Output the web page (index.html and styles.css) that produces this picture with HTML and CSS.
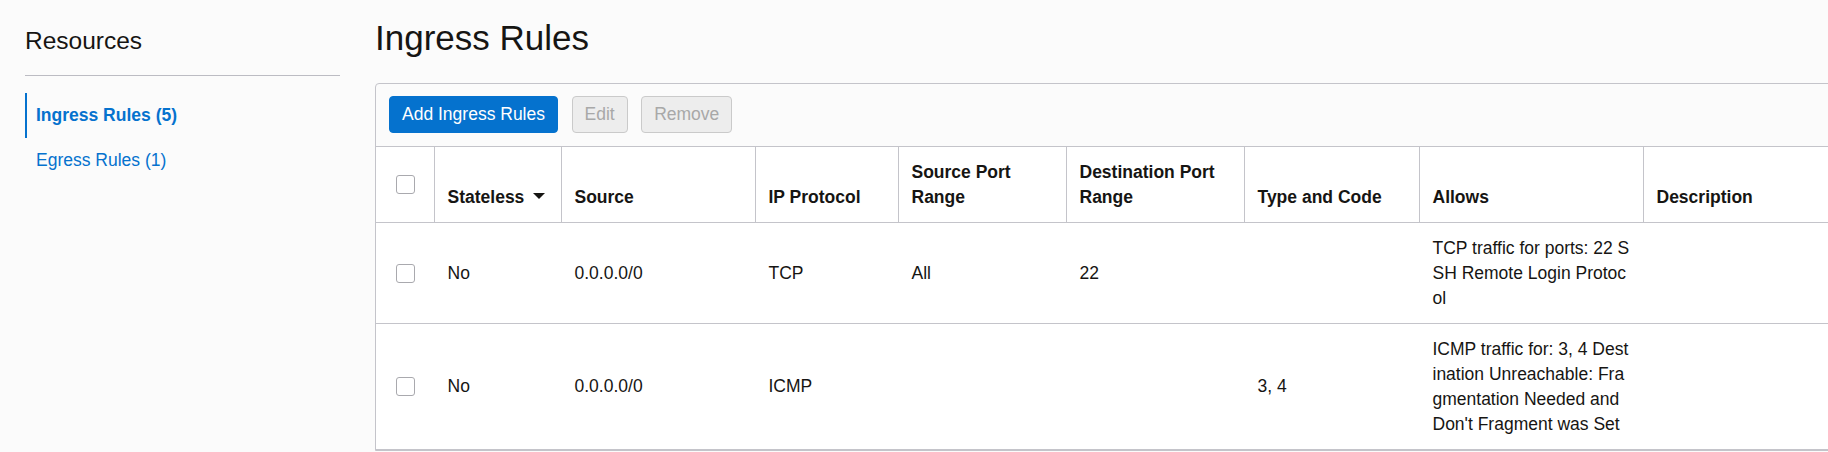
FILE: index.html
```html
<!DOCTYPE html>
<html lang="en">
<head>
<meta charset="utf-8">
<title>Ingress Rules</title>
<link rel="stylesheet" href="styles.css">
</head>
<body>
<div class="page">
  <aside class="sidebar">
    <h2 class="side-title">Resources</h2>
    <nav class="side-nav">
      <a class="side-link active" href="#">Ingress Rules (5)</a>
      <a class="side-link" href="#">Egress Rules (1)</a>
    </nav>
  </aside>
  <main class="main">
    <h1 class="title">Ingress Rules</h1>
    <section class="card">
      <div class="toolbar">
        <button class="btn btn-primary" type="button">Add Ingress Rules</button>
        <button class="btn btn-disabled" type="button" disabled>Edit</button>
        <button class="btn btn-disabled" type="button" disabled>Remove</button>
      </div>
      <table class="rules">
        <colgroup>
          <col class="w-check">
          <col class="w-stateless">
          <col class="w-source">
          <col class="w-proto">
          <col class="w-sport">
          <col class="w-dport">
          <col class="w-type">
          <col class="w-allows">
          <col>
        </colgroup>
        <thead>
          <tr>
            <th class="c-check"><span class="cb"></span></th>
            <th class="nowrap">Stateless<svg class="caret" width="12" height="6" viewBox="0 0 12 6"><path d="M0 0H12L6 6Z"/></svg></th>
            <th>Source</th>
            <th>IP Protocol</th>
            <th>Source Port Range</th>
            <th>Destination Port Range</th>
            <th>Type and Code</th>
            <th>Allows</th>
            <th>Description</th>
          </tr>
        </thead>
        <tbody>
          <tr>
            <td class="c-check"><span class="cb"></span></td>
            <td>No</td>
            <td>0.0.0.0/0</td>
            <td>TCP</td>
            <td>All</td>
            <td>22</td>
            <td></td>
            <td class="allows">TCP traffic for ports: 22 SSH Remote Login Protocol</td>
            <td></td>
          </tr>
          <tr>
            <td class="c-check"><span class="cb"></span></td>
            <td>No</td>
            <td>0.0.0.0/0</td>
            <td>ICMP</td>
            <td></td>
            <td></td>
            <td>3, 4</td>
            <td class="allows">ICMP traffic for: 3, 4 Destination Unreachable: Fragmentation Needed and Don't Fragment was Set</td>
            <td></td>
          </tr>
        </tbody>
      </table>
    </section>
  </main>
</div>
</body>
</html>
```
FILE: styles.css
```css
html, body {
  margin: 0;
  padding: 0;
  background: #fbfbfb;
  overflow: hidden;
}

body {
  font-family: "Liberation Sans", Arial, Helvetica, sans-serif;
  color: #161513;
}

.page {
  display: flex;
  gap: 35px;
  padding: 18px 0 0 25px;
}

/* Sidebar */
.sidebar {
  flex: 0 0 315px;
  padding-top: 9px;
}

.side-title {
  margin: 0;
  font-size: 24.5px;
  line-height: 28px;
  font-weight: normal;
  padding-bottom: 20px;
  border-bottom: 1px solid #bcbcc3;
}

.side-nav {
  display: flex;
  flex-direction: column;
  margin-top: 17px;
}

.side-link {
  display: flex;
  align-items: center;
  height: 45px;
  padding-left: 9px;
  border-left: 2px solid transparent;
  font-size: 17.5px;
  color: #0572ce;
  text-decoration: none;
}

.side-link.active {
  border-left-color: #0572ce;
  font-weight: bold;
}

/* Main */
.main {
  flex: 1;
  min-width: 0;
}

.title {
  margin: 0 0 25px 0;
  font-size: 35px;
  line-height: 40px;
  font-weight: normal;
}

.card {
  width: 1500px;
  border: 1px solid #c4c4ca;
  border-radius: 4px 0 0 0;
  overflow: hidden;
}

.toolbar {
  display: flex;
  gap: 13.5px;
  padding: 12px 13px 13px;
  border-bottom: 1px solid #c4c4ca;
}

.btn {
  box-sizing: border-box;
  height: 37px;
  padding: 0 12px;
  border: 1px solid;
  border-radius: 4px;
  font-family: inherit;
  font-size: 17.5px;
  line-height: 1;
}

.btn-primary {
  background: #0572ce;
  border-color: #0572ce;
  color: #ffffff;
}

.btn-disabled {
  background: #ededed;
  border-color: #cacaca;
  color: #a8a8a8;
}

/* Table */
.rules {
  width: 100%;
  table-layout: fixed;
  border-collapse: separate;
  border-spacing: 0;
  background: #ffffff;
  font-size: 17.5px;
  line-height: 25px;
}

.w-check { width: 58px; }
.w-stateless { width: 127px; }
.w-source { width: 194px; }
.w-proto { width: 143px; }
.w-sport { width: 168px; }
.w-dport { width: 178px; }
.w-type { width: 175px; }
.w-allows { width: 224px; }

.rules th {
  text-align: left;
  vertical-align: bottom;
  font-weight: bold;
  padding: 12.5px 11px 12.5px 12.5px;
  border-left: 1px solid #c4c4ca;
  border-bottom: 1px solid #c4c4ca;
}

.rules td {
  vertical-align: middle;
  padding: 12.5px 11.5px 12.5px 13.5px;
  border-bottom: 1px solid #c4c4ca;
}

.rules th.c-check,
.rules td.c-check {
  border-left: none;
  padding: 0;
  vertical-align: middle;
}

.nowrap {
  white-space: nowrap;
}

.caret {
  margin-left: 9px;
  vertical-align: 4px;
  fill: #161513;
}

.allows {
  word-break: break-all;
}

.cb {
  display: block;
  box-sizing: border-box;
  width: 19px;
  height: 19px;
  margin: 0 auto;
  border: 1px solid #a9a9ae;
  border-radius: 3px;
  background: #ffffff;
}
```
